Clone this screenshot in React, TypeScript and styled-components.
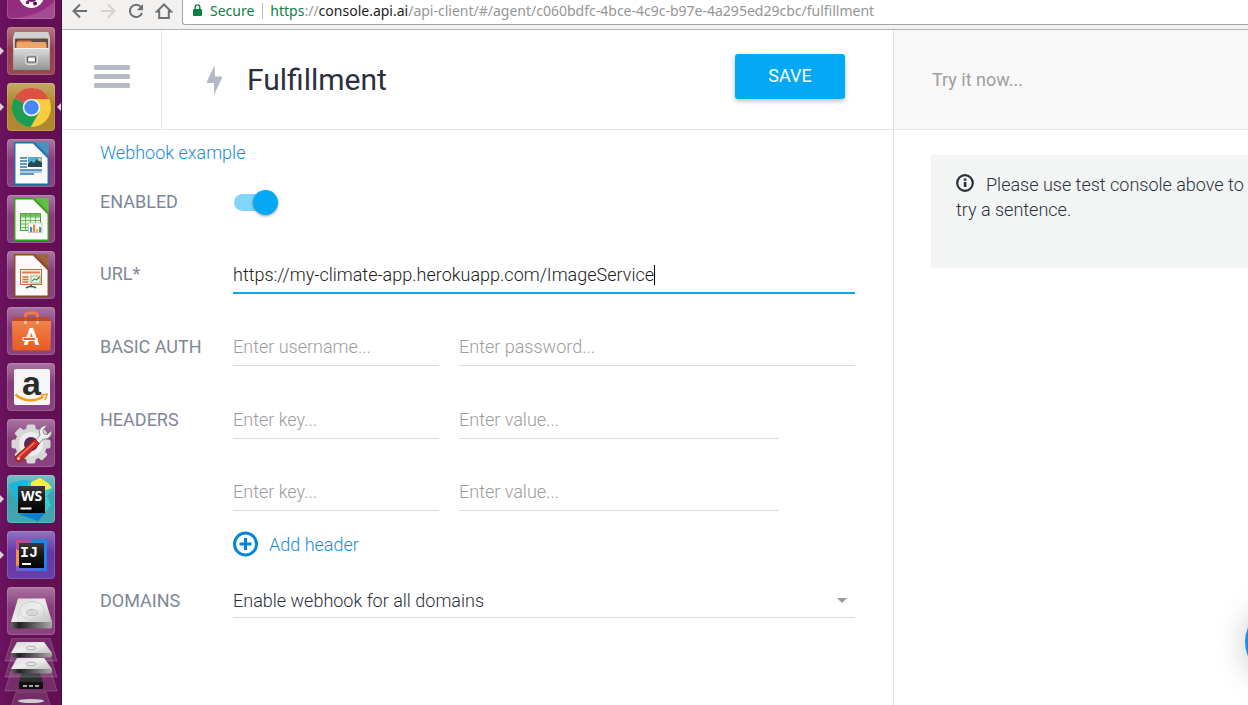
import React from 'react';
import styled, { createGlobalStyle, css } from 'styled-components';

const GlobalStyle = createGlobalStyle`
  *, *::before, *::after { box-sizing: border-box; }
  body {
    margin: 0;
    background: #fff;
    color: #2b303b;
    font: 300 18px/25px Roboto, "Liberation Sans", sans-serif;
  }
  button, input, select { font: inherit; color: inherit; }
`;

/* ---------- Shell ---------- */

const Desktop = styled.div`
  display: flex;
  height: 100vh;
  overflow: hidden;
`;

const Window = styled.div`
  flex: 1;
  min-width: 0;
  display: flex;
  flex-direction: column;
`;

/* ---------- Launcher ---------- */

const Dock = styled.nav`
  flex: none;
  width: 62px;
  display: flex;
  flex-direction: column;
  align-items: center;
  gap: 8px;
  overflow: hidden;
  background: linear-gradient(90deg, #6c1260, #620f54 25%, #620f54);
  border-right: 1px solid #4a0a40;
`;

const DockButton = styled.button<{ $running?: boolean; $focused?: boolean }>`
  position: relative;
  flex: none;
  width: 61px;
  padding: 0 6px 0 7px;
  border: 0;
  background: none;
  line-height: 0;

  ${p => p.$running && css`
    &::before {
      content: '';
      position: absolute;
      left: 0;
      top: 20px;
      border: 4px solid transparent;
      border-left-color: #d9d3d8;
      border-right-width: 0;
    }
  `}
  ${p => p.$focused && css`
    &::after {
      content: '';
      position: absolute;
      right: 0;
      top: 20px;
      border: 4px solid transparent;
      border-right-color: #d9d3d8;
      border-left-width: 0;
    }
  `}
`;

const DefsHolder = styled.svg`
  position: absolute;
`;

const Gradients = () => (
  <DefsHolder width="0" height="0" aria-hidden="true">
    <defs>
      <linearGradient id="gloss" x1="0" y1="0" x2="0" y2="1">
        <stop offset="0" stopColor="#fff" stopOpacity=".34" />
        <stop offset=".45" stopColor="#fff" stopOpacity=".06" />
        <stop offset="1" stopColor="#fff" stopOpacity=".1" />
      </linearGradient>
      <linearGradient id="metal" x1="0" y1="0" x2="0" y2="1">
        <stop offset="0" stopColor="#dcdcdc" />
        <stop offset="1" stopColor="#949494" />
      </linearGradient>
      <linearGradient id="disk" x1="0" y1="0" x2="1" y2="1">
        <stop offset="0" stopColor="#d8d8d8" />
        <stop offset=".5" stopColor="#ededed" />
        <stop offset="1" stopColor="#c0c0c0" />
      </linearGradient>
      <linearGradient id="diskEdge" x1="0" y1="0" x2="1" y2="0">
        <stop offset="0" stopColor="#666" />
        <stop offset=".2" stopColor="#222" />
        <stop offset="1" stopColor="#aaa" />
      </linearGradient>
      <linearGradient id="bag" x1="0" y1="0" x2="0" y2="1">
        <stop offset="0" stopColor="#f0834c" />
        <stop offset="1" stopColor="#e95b20" />
      </linearGradient>
      <linearGradient id="ideaEdge" x1="0" y1="0" x2="1" y2="1">
        <stop offset="0" stopColor="#d6457c" />
        <stop offset=".5" stopColor="#7a5fd0" />
        <stop offset="1" stopColor="#1283ea" />
      </linearGradient>
      <linearGradient id="black" x1="0" y1="0" x2="0" y2="1">
        <stop offset="0" stopColor="#3a3a3a" />
        <stop offset=".5" stopColor="#151515" />
        <stop offset="1" stopColor="#000" />
      </linearGradient>
    </defs>
  </DefsHolder>
);

const Tile = ({ fill = '#7d2f72', crop = 0, children }: {
  fill?: string; crop?: number; children: React.ReactNode;
}) => (
  <svg width="48" height={48 - crop} viewBox={`0 ${crop} 48 ${48 - crop}`} aria-hidden="true">
    <rect width="48" height="48" rx="4" fill={fill} />
    <rect width="48" height="48" rx="4" fill="url(#gloss)" />
    <rect x=".5" y=".5" width="47" height="47" rx="3.5" fill="none" stroke="#fff" strokeOpacity=".15" />
    {children}
  </svg>
);

const Document = ({ color, fold, children }: { color: string; fold: string; children: React.ReactNode }) => (
  <>
    <path d="M7.700 3.700h18.600L41.300 19v26.300H7.700z" fill="#fafafa" stroke={color} strokeWidth="1.500" />
    <path d="M27 3.200h14.600v15z" fill={fold} />
    <path d="M29 3.200h12.600v12.500z" fill="#fff" fillOpacity=".12" />
    {children}
  </>
);

const DashIcon = () => (
  <Tile crop={29} fill="#8a1a74">
    <path d="M4 48C22 46 40 40 48 29v15q0 4-4 4z" fill="#fff" fillOpacity=".14" />
    <circle cx="24.500" cy="24.500" r="12.500" fill="#fff" />
    <circle cx="24.500" cy="24" r="5.500" fill="none" stroke="#7c1668" strokeWidth="3" />
    <circle cx="20.500" cy="31.500" r="1.800" fill="#7c1668" />
    <circle cx="28" cy="32.500" r="2" fill="#5d0f4e" />
  </Tile>
);

const FilesIcon = () => (
  <Tile fill="#8e3444">
    <path d="M8 5h33l2 7v31H6V12z" fill="url(#metal)" />
    <path d="M8 5h33l2 6H6z" fill="#d0d0d0" />
    <rect x="8" y="11.500" width="33" height="9.500" rx="1" fill="#5d4a42" />
    <path d="M9.500 20v-4.500l2-2h12l2 1.500h14V20z" fill="#d9772f" />
    <path d="M9.500 17h30v4h-30z" fill="#f3a363" />
    <path d="M9.500 16h29" stroke="#fbe6cd" strokeWidth=".8" />
    <path d="M7 21h35v22H7z" fill="url(#metal)" />
    <path d="M7 21.500h35" stroke="#f0f0f0" />
    <rect x="18.500" y="27.500" width="12" height="10" rx="2.500" fill="#bdbdbd" stroke="#dadada" />
    <rect x="20.500" y="30" width="8" height="5" rx=".5" fill="#fff" stroke="#555" strokeWidth="1.200" />
  </Tile>
);

const ChromeIcon = () => (
  <Tile fill="#a87d1a">
    <circle cx="24.500" cy="24.500" r="19.500" fill="#fdcb3e" />
    <path d="M7.600 14.700A19.500 19.500 0 0 1 42.100 16H24.500V24.500z" fill="#dc5144" />
    <path d="M7.600 14.700A19.500 19.500 0 0 0 23.700 44L32.300 29 24.500 24.500z" fill="#1e9b56" />
    <circle cx="24.500" cy="24.500" r="8.800" fill="#f4f4f4" />
    <circle cx="24.500" cy="24.500" r="7.200" fill="#4787f0" />
  </Tile>
);

const WriterIcon = () => (
  <Tile>
    <Document color="#1b6fa5" fold="#3283b8">
      <path d="M13 19h7M13 22h7M13 25h7M13 28h7M13 31h22M13 35h14" stroke="#2d78ae" strokeWidth="1.500" />
      <path d="M13 33h22" stroke="#5a9ccb" />
      <rect x="21" y="18" width="14" height="10" fill="#58aadd" />
      <path d="M21 25l3-3 3 2 3-4 5 4v4H21z" fill="#244a4c" />
      <circle cx="32.500" cy="20.500" r="1.500" fill="#f7d94c" />
    </Document>
  </Tile>
);

const CalcIcon = () => (
  <Tile>
    <Document color="#37a016" fold="#4db82b">
      <rect x="13.500" y="18.500" width="20" height="17" fill="#e6f5e0" stroke="#3f9f28" />
      <rect x="13.500" y="18.500" width="20" height="3" fill="#6fbf58" />
      <path d="M13.500 22h20M13.500 25.500h20M13.500 29h20M13.500 32.500h20M18.500 18.500v17M23.500 18.500v17M28.500 18.500v17" stroke="#4fa83a" strokeWidth=".8" />
      <rect x="21.500" y="28" width="13.500" height="9.500" fill="#fff" stroke="#c8c8c8" />
      <path d="M23 37v-5h2.200v5z" fill="#3a8fd0" />
      <path d="M26 37v-7.500h2.200V37z" fill="#f0843c" />
      <path d="M29 37v-3h2.200v3z" fill="#f2b53b" />
      <path d="M32 37v-5h2.200v5z" fill="#3a9a8c" />
    </Document>
  </Tile>
);

const ImpressIcon = () => (
  <Tile>
    <Document color="#8a4b22" fold="#8f512b">
      <rect x="13.500" y="18.500" width="21" height="15" fill="#fbeee4" stroke="#c06a3c" />
      <path d="M15 21.500h18" stroke="#d9825b" strokeWidth="2" />
      <path d="M15.500 26h6M15.500 28.500h6M15.500 31h6" stroke="#d9703f" strokeWidth="1.500" />
      <rect x="24" y="25" width="9" height="7" fill="#fff" stroke="#6ca84c" strokeWidth=".8" />
      <path d="m25 30 2.500-2 2 1 3-3" fill="none" stroke="#2b9a3c" strokeWidth="1.200" />
      <path d="M24 34v2m-5 1c2-2 8-2 10 0" fill="none" stroke="#444" strokeWidth="1.500" />
    </Document>
  </Tile>
);

const SoftwareIcon = () => (
  <Tile>
    <path d="M18.500 15V9q0-3 3-3h6q3 0 3 3v6" fill="none" stroke="#ef7a45" strokeWidth="3" />
    <path d="M7 10h34l3 5H5z" fill="#c2481d" fillOpacity=".8" />
    <path d="M5 14h39l-.5 29.500h-38z" fill="url(#bag)" />
    <circle cx="18.500" cy="15.500" r="1.500" fill="#fbd3bd" />
    <circle cx="30.500" cy="15.500" r="1.500" fill="#fbd3bd" />
    <text x="24.500" y="37.500" textAnchor="middle" fill="#fff" fontFamily="Roboto, sans-serif" fontWeight="700" fontSize="23">A</text>
    <path d="M16 30.500h11l4 1.500-4 1.500H16z" fill="#e65f2a" stroke="#fff" />
  </Tile>
);

const AmazonIcon = () => (
  <Tile>
    <rect x="7" y="6" width="36" height="36" rx="2" fill="#f6f6f6" />
    <text x="24.500" y="32" textAnchor="middle" fill="#2b2b2b" fontFamily="Liberation Sans, sans-serif" fontWeight="700" fontSize="34">a</text>
    <path d="M8.500 31.500c8 7.500 20 7 28 2" fill="none" stroke="#f79b1c" strokeWidth="2.500" />
    <path d="m33.500 32 6.500-.8-2 6" fill="none" stroke="#f79b1c" strokeWidth="1.600" />
  </Tile>
);

const SettingsIcon = () => (
  <Tile>
    <g fill="#d7d7d7">
      {[0, 45, 90, 135].map(angle => (
        <rect key={angle} x="19.500" y="5.500" width="9" height="39" rx="2" transform={`rotate(${angle} 24 25)`} />
      ))}
      <circle cx="24" cy="25" r="16" />
    </g>
    <circle cx="24" cy="25" r="12" fill="#ededed" />
    <circle cx="24" cy="25" r="7" fill="#5c2952" />
    <path d="m27 23 6-7c-2-6 2-10 7-9.500l-4 5 1 3.500 3.500.5 3.800-4c1 5-3 9.500-8 8.500l-6 6.500z" fill="#eee" stroke="#777" strokeWidth=".8" />
    <path d="m28 20 4.500 4.500L14 42c-3 2.500-7.500-1.500-5-5z" fill="#cf2b22" stroke="#831a14" strokeWidth=".8" />
    <path d="M27.500 23.500 11.500 38" stroke="#f08078" strokeWidth="1.500" />
    <circle cx="11.500" cy="39.500" r="1.300" fill="#fff" />
  </Tile>
);

const WebStormIcon = () => (
  <Tile fill="#2f9da6">
    <path d="M2 9 15 5l16 2 3 31-19 2z" fill="#16b9dc" />
    <path d="M21 8 34 5l11 9-5 7 4 9-6 8-16-8z" fill="#35cbd3" />
    <path d="m24 7 9-4 8 5 4 5-9 3H24z" fill="#f5ee4e" />
    <path d="m11 39 20-3 8 1-8 9z" fill="#0a7fd0" />
    <rect x="11" y="11" width="27" height="27" fill="url(#black)" />
    <text x="24.500" y="26" textAnchor="middle" fill="#fff" fontFamily="Open Sans, sans-serif" fontWeight="700" fontSize="14">WS</text>
    <rect x="13.500" y="32.500" width="11" height="2" fill="#fff" />
  </Tile>
);

const IdeaIcon = () => (
  <Tile fill="#5a2aa0">
    <path d="M9 9h31v31H9z" fill="url(#ideaEdge)" />
    <path d="M9 18l7 4-3 12-4 1z" fill="#f7913d" />
    <path d="M24 9h16v24l-12-9z" fill="#1d86e8" />
    <rect x="12" y="12" width="25" height="25" fill="url(#black)" />
    <text x="13" y="26" fill="#fff" fontFamily="Liberation Mono, monospace" fontWeight="700" fontSize="15">IJ</text>
    <rect x="15" y="32" width="9" height="2" fill="#fff" />
  </Tile>
);

const DiskIcon = () => (
  <Tile>
    <path d="M11 11.500h27L45 35H4z" fill="url(#disk)" />
    <path d="M4 35h41v4.500q0 2-2 2H6q-2 0-2-2z" fill="url(#diskEdge)" />
    <ellipse cx="25" cy="23.500" rx="12.500" ry="9" fill="none" stroke="#d0d0d0" />
    <ellipse cx="25" cy="25.500" rx="5.500" ry="3.200" fill="#e0e0e0" stroke="#b8b8b8" />
    <ellipse cx="25" cy="25.500" rx="2.500" ry="1.300" fill="none" stroke="#ccc" />
    <path d="M12 32c-3-1 0-4-1-6M38 32l3-1" fill="none" stroke="#ccc" />
  </Tile>
);

const FoldedDisk = ({ y }: { y: number }) => (
  <g>
    <path d={`M10 ${y}h38l7 23H3z`} fill="#fff" fillOpacity=".13" stroke="#fff" strokeOpacity=".22" strokeWidth=".8" />
    <path d={`M15 ${y + 4}h27l8 11H9z`} fill="url(#disk)" />
    <path d={`M9 ${y + 15}h41v2q0 2-4 2.500H15q-6 0-6-2.500z`} fill="url(#diskEdge)" />
    <ellipse cx="29" cy={y + 10} rx="5" ry="1.800" fill="#e6e6e6" stroke="#b0b0b0" />
  </g>
);

const Stack = styled.svg`
  flex: none;
  margin-top: -5px;
`;

const FoldedStack = () => (
  <Stack width="58" height="68" viewBox="0 0 58 68" aria-hidden="true">
    <path d="M9 33h40l6 20H3zM14 54h30l8 24H6z" fill="#fff" fillOpacity=".12" stroke="#fff" strokeOpacity=".22" strokeWidth=".8" />
    <ellipse cx="29" cy="63" rx="13" ry="2" fill="#cfcfcf" />
    <path d="M19 35h19l3 10v3H17v-3z" fill="#2c2c2c" />
    <path d="M17 44h24v6q0 1-1 1H18q-1 0-1-1z" fill="#111" />
    <path d="M21 48h4m2 0h4m2 0h4" stroke="#d8d8d8" strokeWidth="1.500" />
    <FoldedDisk y={16} />
    <FoldedDisk y={0} />
  </Stack>
);

const launchers = [
  { label: 'Search your computer', Icon: DashIcon },
  { label: 'Files', Icon: FilesIcon, running: true },
  { label: 'Google Chrome', Icon: ChromeIcon, running: true, focused: true },
  { label: 'LibreOffice Writer', Icon: WriterIcon },
  { label: 'LibreOffice Calc', Icon: CalcIcon },
  { label: 'LibreOffice Impress', Icon: ImpressIcon },
  { label: 'Ubuntu Software', Icon: SoftwareIcon },
  { label: 'Amazon', Icon: AmazonIcon },
  { label: 'System Settings', Icon: SettingsIcon },
  { label: 'WebStorm', Icon: WebStormIcon, running: true },
  { label: 'IntelliJ IDEA', Icon: IdeaIcon, running: true },
  { label: 'Disk', Icon: DiskIcon },
];

/* ---------- Browser toolbar ---------- */

const Toolbar = styled.header`
  flex: none;
  display: flex;
  align-items: flex-start;
  height: 30px;
  padding-left: 4px;
  background: #f2f1f0;
  border-bottom: 1px solid #b4b1ae;
`;

const NavButton = styled.button`
  flex: none;
  display: grid;
  place-items: center;
  width: 28px;
  height: 22px;
  padding: 0;
  border: 0;
  background: none;
`;

const AddressBar = styled.div`
  flex: 1;
  min-width: 0;
  display: flex;
  align-items: flex-start;
  height: 25px;
  margin-left: 4px;
  padding-left: 10px;
  background: #fff;
  border: solid #a5a3a1;
  border-width: 0 0 1px 1px;
  border-bottom-left-radius: 3px;
  font: 400 14px/22px "Noto Sans", "Open Sans", sans-serif;
  white-space: nowrap;
`;

const Lock = styled.svg`
  margin: 4px 8px 0 0;
`;

const Secure = styled.span`
  padding-right: 8px;
  color: #0b8043;
`;

const Address = styled.span`
  padding-left: 8px;
  color: #969696;
  background: linear-gradient(#b9b9b9, #b9b9b9) 0 3px / 1px 16px no-repeat;
`;

const Scheme = styled.span`
  color: #0b8043;
`;

const Host = styled.span`
  color: #222;
`;

/* ---------- App ---------- */

const Page = styled.div`
  flex: 1;
  min-height: 0;
  display: flex;
`;

const Main = styled.main`
  flex: 1;
  min-width: 0;
`;

const TitleBar = styled.div`
  display: flex;
  align-items: center;
  height: 100px;
  padding-right: 48px;
  border-bottom: 1px solid #e5e5e5;
`;

const MenuButton = styled.button`
  align-self: stretch;
  width: 100px;
  padding: 0;
  border: 0;
  border-right: 1px solid #e5e5e5;
  background: none;
`;

const Bolt = styled.svg`
  flex: none;
  margin: 0 24px 0 44px;
`;

const Title = styled.h1`
  flex: 1;
  margin: 0;
  font-size: 30px;
  line-height: 36px;
  font-weight: 400;
`;

const SaveButton = styled.button`
  width: 110px;
  height: 45px;
  margin-bottom: 6px;
  padding: 0 0 2px;
  border: 0;
  border-radius: 3px;
  background: #03a9f4;
  box-shadow: 0 2px 5px rgba(0, 0, 0, 0.28);
  color: #fff;
  font-weight: 400;
`;

const Form = styled.form`
  padding: 10px 38px;
`;

const Link = styled.a`
  color: #1a8cd8;
  text-decoration: none;
`;

const Row = styled.div<{ $gap?: number }>`
  display: grid;
  grid-template-columns: 133px minmax(0, 1fr);
  align-items: start;
  margin-top: ${p => p.$gap ?? 35}px;
`;

const Label = styled.label<{ $height?: number }>`
  color: #7f8797;
  font-weight: 400;
  line-height: ${p => p.$height ?? 37}px;
`;

const Fields = styled.div<{ $inset?: boolean }>`
  display: grid;
  grid-template-columns: 206px minmax(0, 1fr);
  gap: 34px 20px;
  padding-right: ${p => (p.$inset ? 76 : 0)}px;
`;

const underline = css`
  width: 100%;
  height: 38px;
  border: 0;
  border-bottom: 1px solid #dcdcdc;
  border-radius: 0;
  background: none;
  outline: 0;
`;

const Input = styled.input`
  ${underline}
  padding: 0;
  &::placeholder { color: #9c9c9c; opacity: 1; }
`;

const ActiveField = styled.div`
  ${underline}
  display: flex;
  align-items: center;
  padding-top: 2px;
  border-color: #03a9f4;
  box-shadow: 0 1px 0 #03a9f4;
`;

const UrlInput = styled.input`
  field-sizing: content;
  max-width: 100%;
  padding: 0;
  border: 0;
  outline: 0;
  background: none;
  color: #212121;
  caret-color: transparent;
`;

const Caret = styled.span`
  width: 1px;
  height: 20px;
  background: #000;
`;

const Toggle = styled.input`
  appearance: none;
  display: flex;
  align-items: center;
  width: 38px;
  height: 17px;
  margin: 11px 0 9px 1px;
  border-radius: 9px;
  background: #81d4fa;

  &::before {
    content: '';
    flex: none;
    width: 25px;
    height: 25px;
    margin-left: 19px;
    border-radius: 50%;
    background: #03a9f4;
    box-shadow: 0 1px 3px rgba(0, 0, 0, 0.4);
  }
`;

const AddButton = styled.button`
  display: flex;
  align-items: center;
  gap: 10px;
  margin: 20px 0 0 133px;
  padding: 0;
  border: 0;
  background: none;
  color: #1a8cd8;
`;

const SelectField = styled.div`
  display: grid;
  align-items: center;
  > * { grid-area: 1 / 1; }
`;

const Select = styled.select`
  ${underline}
  height: 35px;
  appearance: none;
  padding: 0;
`;

const Arrow = styled.svg`
  justify-self: end;
  margin-right: 8px;
  pointer-events: none;
`;

/* ---------- Test console ---------- */

const Side = styled.aside`
  flex: none;
  width: 355px;
  border-left: 1px solid #e0e0e0;
`;

const TryBox = styled.div`
  height: 100px;
  padding-left: 38px;
  background: #f8f8f8;
  border-bottom: 1px solid #e5e5e5;
`;

const TryInput = styled.input`
  width: 100%;
  height: 99px;
  padding: 0;
  border: 0;
  outline: 0;
  background: none;
  font-weight: 400;
  &::placeholder { color: #9e9e9e; opacity: 1; }
`;

const Notice = styled.p`
  min-height: 113px;
  margin: 25px 0 0 37px;
  padding: 17px 0 17px 25px;
  background: #f3f5f5;

  svg {
    margin-right: 12px;
    vertical-align: -1px;
  }
`;

const ChatButton = styled.button`
  position: fixed;
  right: -69px;
  bottom: 27px;
  width: 72px;
  height: 72px;
  border: 0;
  border-radius: 50%;
  background: #1a8cf0;
  box-shadow: 0 2px 32px rgba(0, 0, 0, 0.22);
`;

export default function App() {
  return (
    <Desktop>
      <GlobalStyle />
      <Gradients />
      <Dock aria-label="Launcher">
        {launchers.map(({ label, Icon, running, focused }) => (
          <DockButton key={label} aria-label={label} $running={running} $focused={focused}>
            <Icon />
          </DockButton>
        ))}
        <FoldedStack />
      </Dock>

      <Window>
        <Toolbar>
          <NavButton aria-label="Back">
            <svg width="16" height="16" viewBox="0 0 16 16" fill="none" stroke="#6f6f6f" strokeWidth="2">
              <path d="M15 8H2.500M8 1.500 1.500 8 8 14.500" />
            </svg>
          </NavButton>
          <NavButton aria-label="Forward" disabled>
            <svg width="16" height="16" viewBox="0 0 16 16" fill="none" stroke="#d3d2d1" strokeWidth="2">
              <path d="M1 8h12.500M8 1.500 14.500 8 8 14.500" />
            </svg>
          </NavButton>
          <NavButton aria-label="Reload">
            <svg width="16" height="16" viewBox="0 0 16 16" fill="none" stroke="#6f6f6f" strokeWidth="2">
              <path d="M13 4A6.200 6.200 0 1 0 14 9.800" />
              <path d="M15 1v6.200H8.800z" fill="#6f6f6f" stroke="none" />
            </svg>
          </NavButton>
          <NavButton aria-label="Home">
            <svg width="18" height="16" viewBox="0 0 18 16" fill="none" stroke="#6f6f6f" strokeWidth="2">
              <path d="M9 1.500 2 8.500h2.200V15h9.600V8.500H16z" />
            </svg>
          </NavButton>
          <AddressBar>
            <Lock width="9" height="12" viewBox="0 0 9 12" aria-hidden="true">
              <rect y="5" width="9" height="7" rx="1" fill="#0b8043" />
              <path d="M2.200 5.500V3.200a2.300 2.300 0 0 1 4.600 0v2.300" fill="none" stroke="#0b8043" strokeWidth="1.400" />
            </Lock>
            <Secure>Secure</Secure>
            <Address>
              <Scheme>https</Scheme>://<Host>console.api.ai</Host>/api-client/#/agent/c060bdfc-4bce-4c9c-b97e-4a295ed29cbc/fulfillment
            </Address>
          </AddressBar>
        </Toolbar>

        <Page>
          <Main>
            <TitleBar>
              <MenuButton aria-label="Menu">
                <svg width="36" height="23" viewBox="0 0 36 23" fill="#b4bac5">
                  <rect y="0" width="36" height="5" rx="1.500" />
                  <rect y="9" width="36" height="5" rx="1.500" />
                  <rect y="18" width="36" height="5" rx="1.500" />
                </svg>
              </MenuButton>
              <Bolt width="17" height="30" viewBox="0 0 17 30" fill="#b4bac5" aria-hidden="true">
                <path d="M8.500 0 1 16.500q-.5 1.500 1 1.500h6V30l8-17q.5-1.500-1-1.500H9z" />
              </Bolt>
              <Title>Fulfillment</Title>
              <SaveButton type="submit" form="fulfillment">SAVE</SaveButton>
            </TitleBar>

            <Form id="fulfillment" onSubmit={e => e.preventDefault()}>
              <Link href="#webhook">Webhook example</Link>

              <Row $gap={18}>
                <Label htmlFor="enabled">ENABLED</Label>
                <Toggle id="enabled" type="checkbox" role="switch" defaultChecked />
              </Row>

              <Row>
                <Label htmlFor="url" $height={38}>URL*</Label>
                <ActiveField>
                  <UrlInput id="url" defaultValue="https://my-climate-app.herokuapp.com/ImageService" />
                  <Caret />
                </ActiveField>
              </Row>

              <Row>
                <Label htmlFor="user">BASIC AUTH</Label>
                <Fields>
                  <Input id="user" placeholder="Enter username..." />
                  <Input type="password" aria-label="Password" placeholder="Enter password..." />
                </Fields>
              </Row>

              <Row>
                <Label htmlFor="key">HEADERS</Label>
                <Fields $inset>
                  <Input id="key" placeholder="Enter key..." />
                  <Input aria-label="Value" placeholder="Enter value..." />
                  <Input aria-label="Key" placeholder="Enter key..." />
                  <Input aria-label="Value" placeholder="Enter value..." />
                </Fields>
              </Row>

              <AddButton type="button">
                <svg width="26" height="26" viewBox="0 0 26 26" fill="none" stroke="#0288d9" strokeWidth="3" aria-hidden="true">
                  <circle cx="12.500" cy="13" r="11" />
                  <path d="M12.500 7v12M6.500 13h12" />
                </svg>
                Add header
              </AddButton>

              <Row $gap={26}>
                <Label htmlFor="domains" $height={35}>DOMAINS</Label>
                <SelectField>
                  <Select id="domains">
                    <option>Enable webhook for all domains</option>
                  </Select>
                  <Arrow width="10" height="5" viewBox="0 0 10 5" fill="#9a9a9a" aria-hidden="true">
                    <path d="M0 0h10L5 5z" />
                  </Arrow>
                </SelectField>
              </Row>
            </Form>
          </Main>

          <Side>
            <TryBox>
              <TryInput aria-label="Try it now" placeholder="Try it now..." />
            </TryBox>
            <Notice>
              <svg width="18" height="18" viewBox="0 0 18 18" aria-hidden="true">
                <circle cx="9" cy="9" r="7.800" fill="none" stroke="#2b303b" strokeWidth="2.200" />
                <path d="M7.800 8h2.600v5H7.800zM7.800 4.500h2.600v2.200H7.800z" fill="#2b303b" />
              </svg>
              Please use test console above to try a sentence.
            </Notice>
          </Side>
        </Page>
      </Window>
      <ChatButton aria-label="Open chat" />
    </Desktop>
  );
}
